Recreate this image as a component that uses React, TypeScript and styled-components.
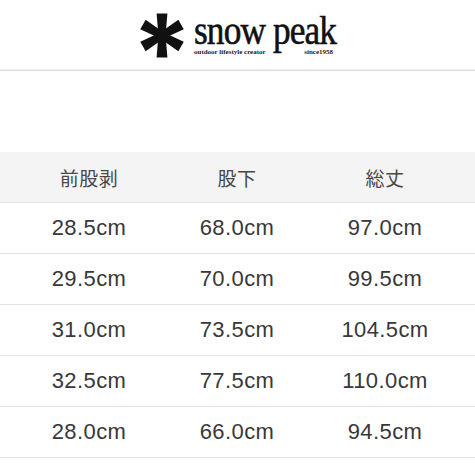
import React from "react";
import styled, { createGlobalStyle } from "styled-components";

const Global = createGlobalStyle`
  html, body { margin: 0; padding: 0; background: #fff; }
  body { font-family: "Liberation Sans", "Noto Sans CJK JP", sans-serif; }
`;

const Page = styled.div`
  width: 475px;
  height: 475px;
  overflow: hidden;
  background: #fff;
`;

const Header = styled.header`
  height: 70px;
  display: flex;
  align-items: center;
  justify-content: center;
  border-bottom: 1px solid #dcdcdc;
  box-shadow: 0 -1px 0 #f0f0f0 inset;
`;

const Logo = styled.div`
  display: flex;
  align-items: center;
  gap: 9px;
  margin-top: 1px;
`;

const Word = styled.div`
  display: flex;
  flex-direction: column;
  width: 142px;
`;

const Brand = styled.div`
  font-family: "Liberation Serif", "Times New Roman", serif;
  font-weight: 400;
  font-size: 41px;
  line-height: 30px;
  height: 30px;
  color: #111;
  letter-spacing: -1px;
  white-space: nowrap;
  transform: scaleX(0.86);
  transform-origin: left center;
  -webkit-text-stroke: 0.6px #111;
`;

const Tagline = styled.div`
  display: flex;
  justify-content: space-between;
  font-family: "Liberation Serif", "Times New Roman", serif;
  font-weight: 700;
  font-size: 7px;
  line-height: 8px;
  color: #222;
  margin-top: 3px;
  padding-right: 3px;
`;

const Spacer = styled.div`
  height: 81px;
`;

const Table = styled.div`
  display: flex;
  flex-direction: column;
`;

const Row = styled.div<{ $head?: boolean }>`
  height: 50px;
  display: grid;
  grid-template-columns: repeat(3, 148px);
  padding-left: 15px;
  align-items: center;
  background: ${(p) => (p.$head ? "#f4f4f4" : "#fff")};
  border-bottom: 1px solid #e2e2e2;
`;

const Cell = styled.div<{ $head?: boolean }>`
  text-align: center;
  color: ${(p) => (p.$head ? "#484848" : "#383838")};
  font-family: ${(p) =>
    p.$head
      ? `"Noto Sans CJK JP", sans-serif`
      : `"Liberation Sans", Arial, sans-serif`};
  font-size: ${(p) => (p.$head ? "19px" : "22px")};
  letter-spacing: ${(p) => (p.$head ? "0.5px" : "0.4px")};
  font-weight: 400;
`;

const Asterisk = () => {
  const arm = "M-3.6,0 L3.6,0 L5.4,-22 L-5.4,-22 Z";
  return (
    <svg width="46" height="47" viewBox="-23 -23.5 46 47">
      {[0, 60, 120, 180, 240, 300].map((a) => (
        <path key={a} d={arm} fill="#111" transform={`rotate(${a})`} />
      ))}
      <circle r="5" fill="#111" />
    </svg>
  );
};

const head = ["前股剥", "股下", "総丈"];
const rows = [
  ["28.5cm", "68.0cm", "97.0cm"],
  ["29.5cm", "70.0cm", "99.5cm"],
  ["31.0cm", "73.5cm", "104.5cm"],
  ["32.5cm", "77.5cm", "110.0cm"],
  ["28.0cm", "66.0cm", "94.5cm"],
];

export default function App() {
  return (
    <Page>
      <Global />
      <Header>
        <Logo>
          <Asterisk />
          <Word>
            <Brand>snow peak</Brand>
            <Tagline>
              <span>outdoor lifestyle creator</span>
              <span>since1958</span>
            </Tagline>
          </Word>
        </Logo>
      </Header>
      <Spacer />
      <Table>
        <Row $head>
          {head.map((h) => (
            <Cell $head key={h}>
              {h}
            </Cell>
          ))}
        </Row>
        {rows.map((r, i) => (
          <Row key={i}>
            {r.map((c, j) => (
              <Cell key={j}>{c}</Cell>
            ))}
          </Row>
        ))}
      </Table>
    </Page>
  );
}
